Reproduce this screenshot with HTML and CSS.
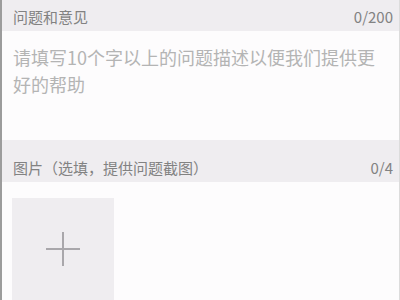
FILE: index.html
```
<!DOCTYPE html>
<html lang="zh-CN">
<head>
    <meta charset="UTF-8">
    <meta name="viewport" content="width=device-width, initial-scale=1.0">
    <title>意见反馈</title>
    <link rel="stylesheet" href="styles.css">
</head>
<body>
    <div class="page">
        <div class="head head-first">
            <span>问题和意见</span>
            <span class="count">0/200</span>
        </div>
        <div class="textbox">
            <div class="placeholder">请填写10个字以上的问题描述以便我们提供更好的帮助</div>
        </div>
        <div class="head head-second">
            <span>图片（选填，提供问题截图）</span>
            <span class="count">0/4</span>
        </div>
        <div class="pics">
            <div class="add-pic">
                <svg width="36" height="36" viewBox="0 0 36 36">
                    <path d="M18 1V35M1 18H35" stroke="#a9a7ab" stroke-width="2" fill="none"/>
                </svg>
            </div>
        </div>
    </div>
</body>
</html>
```

FILE: styles.css
```
* {
    margin: 0;
    padding: 0;
    box-sizing: border-box;
}
body {
    width: 400px;
    height: 300px;
    overflow: hidden;
    background-color: #fdfcfd;
    font-family: "Noto Sans CJK SC", "Noto Sans", sans-serif;
}
.page {
    height: 300px;
    border-left: 2px solid #9c9c9c;
    border-right: 1px solid #dcdcdc;
}
.head {
    display: flex;
    justify-content: space-between;
    align-items: flex-end;
    background-color: #efedf0;
    color: #828282;
    font-size: 15px;
    line-height: 20px;
    padding: 0 6px 4px 11px;
}
.head-first {
    height: 31px;
}
.head-second {
    height: 42px;
}
.count {
    font-size: 15px;
}
.textbox {
    height: 109px;
    padding: 13px 20px 0 11px;
}
.placeholder {
    color: #b4b4b4;
    font-size: 18px;
    line-height: 27px;
}
.pics {
    padding: 16px 0 0 10px;
}
.add-pic {
    width: 102px;
    height: 102px;
    background-color: #efedf0;
    display: flex;
    align-items: center;
    justify-content: center;
}
```
